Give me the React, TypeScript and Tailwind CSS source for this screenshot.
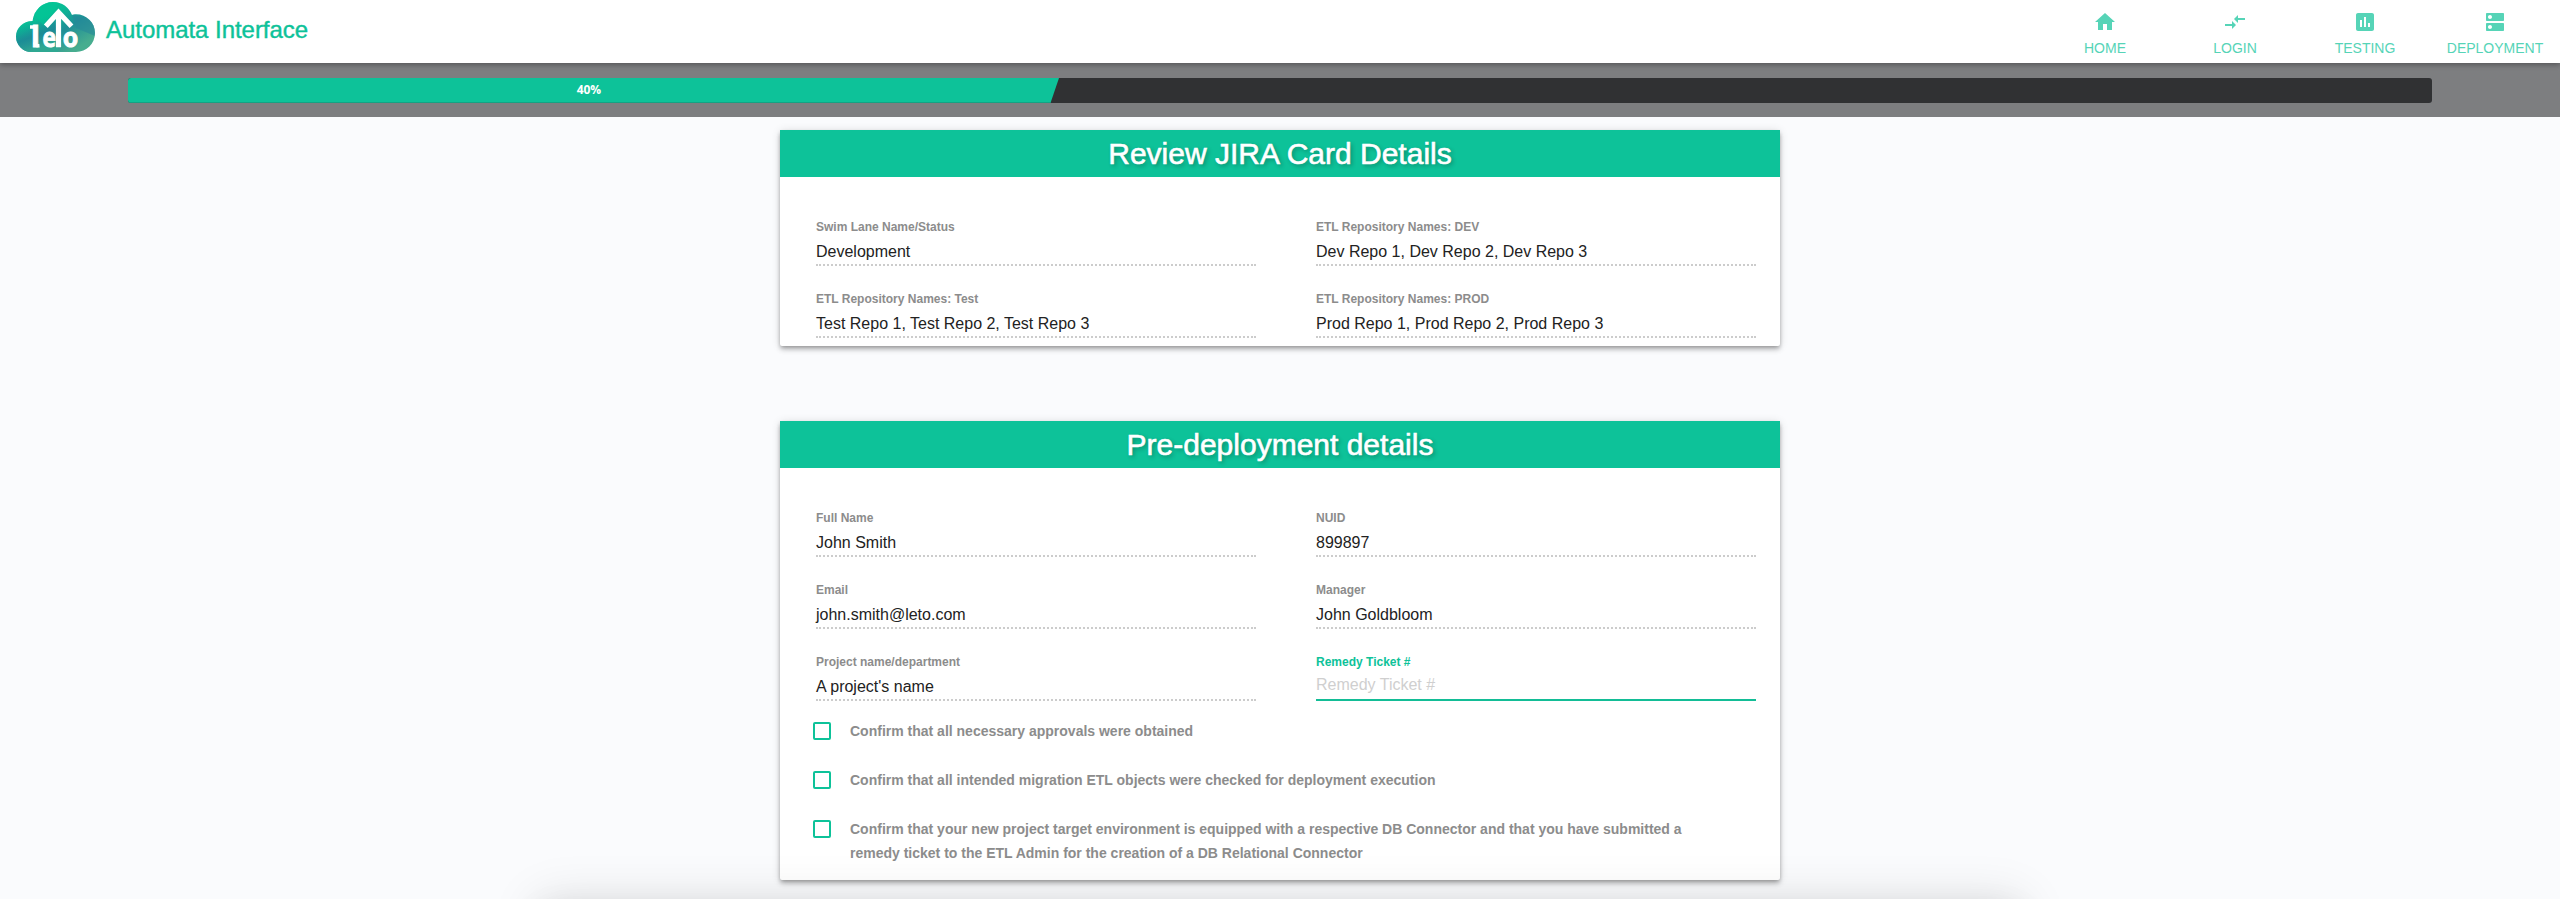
import type { ReactNode } from 'react';

const HOME = 'M10 20v-6h4v6h5v-8h3L12 3 2 12h3v8z';
const COMPARE = 'M9.01 14H2v2h7.01v3L13 15l-3.99-4v3zm5.98-1v-3H22V8h-7.01V5L11 9l3.99 4z';
const ASSESSMENT =
  'M19 3H5c-1.1 0-2 .9-2 2v14c0 1.1.9 2 2 2h14c1.1 0 2-.9 2-2V5c0-1.1-.9-2-2-2zM9 17H7v-7h2v7zm4 0h-2V7h2v10zm4 0h-2v-4h2v4z';
const DNS =
  'M20 13H4c-.55 0-1 .45-1 1v6c0 .55.45 1 1 1h16c.55 0 1-.45 1-1v-6c0-.55-.45-1-1-1zM7 19c-1.1 0-2-.9-2-2s.9-2 2-2 2 .9 2 2-.9 2-2 2zM20 3H4c-.55 0-1 .45-1 1v6c0 .55.45 1 1 1h16c.55 0 1-.45 1-1V4c0-.55-.45-1-1-1zM7 9c-1.1 0-2-.9-2-2s.9-2 2-2 2 .9 2 2-.9 2-2 2z';

const NAV = [
  { label: 'HOME', d: HOME },
  { label: 'LOGIN', d: COMPARE },
  { label: 'TESTING', d: ASSESSMENT },
  { label: 'DEPLOYMENT', d: DNS },
];

function Logo() {
  return (
    <svg viewBox="0 0 79 60" className="h-[60px] w-[79px] shrink-0">
      <defs>
        <linearGradient id="cloud" x1="0" y1="0" x2="1" y2="1">
          <stop offset="0.1" stopColor="#0dbf98" />
          <stop offset="0.35" stopColor="#08bd95" />
          <stop offset="0.58" stopColor="#1f8f97" />
          <stop offset="0.85" stopColor="#47ad8f" />
        </linearGradient>
        <linearGradient id="cloudLeft" x1="0" y1="0" x2="0.300" y2="1">
          <stop offset="0.45" stopColor="#1d8796" stopOpacity="0" />
          <stop offset="0.75" stopColor="#1d8796" stopOpacity=".85" />
          <stop offset="1" stopColor="#2fa892" />
        </linearGradient>
        <clipPath id="cloudShape">
          <path d="M15.500 50A15.500 15.500 0 0 1 0 34.500C0 26 7 18.800 16.500 18.900 18 8 26.500 0 37 0c9 0 16 5.200 19 13 1-.4 2.500-.7 4-.7C70.500 12.300 79 20.500 79 31S70.500 50 60 50z" />
        </clipPath>
      </defs>
      <g clipPath="url(#cloudShape)">
        <rect width="79" height="50" fill="url(#cloud)" />
        <rect width="42" height="50" fill="url(#cloudLeft)" />
        <path d="M16 10 30 0h14L28 24z" fill="#00c896" opacity=".6" />
        <path d="M56 12 79 20v14L60 26z" fill="#27899a" opacity=".6" />
      </g>
      <path d="M42.500 45.300V11M29.800 24.300 42.500 10.300l13 14" fill="none" stroke="#fff" strokeWidth="5.200" />
      <g fill="#fff" stroke="#fff" strokeWidth=".9" fontFamily="'Open Sans', sans-serif" fontWeight="700">
        <text x="15" y="45.300" fontSize="29">l</text>
        <text x="26.500" y="45.300" fontSize="26" textLength="13.500" lengthAdjust="spacingAndGlyphs">e</text>
        <text x="46.800" y="45.300" fontSize="26" textLength="15.500" lengthAdjust="spacingAndGlyphs">o</text>
      </g>
      <path d="M14 25h4M19 40.500c0 2.500 1 3.500 4.500 3.200" fill="none" stroke="#fff" strokeWidth="3.600" />
    </svg>
  );
}

function Card({ title, children }: { title: string; children: ReactNode }) {
  return (
    <section className="w-[1000px] rounded-[2px] bg-white shadow-[0_4px_5px_0_rgba(0,0,0,0.14),0_1px_10px_0_rgba(0,0,0,0.12),0_2px_4px_-1px_rgba(0,0,0,0.3)]">
      <h2 className="h-[47px] bg-[#0dc299] text-center text-[30px] leading-[48px] text-white [-webkit-text-stroke:0.6px_white] [text-shadow:2px_2px_4px_rgba(0,0,0,0.3)]">
        {title}
      </h2>
      <div className="px-6 pt-[17px]">{children}</div>
    </section>
  );
}

function Field({ label, value, active }: { label: string; value: string; active?: boolean }) {
  return (
    <div className="flex h-[72px] flex-col justify-end">
      <label className={active ? 'mb-1 text-xs font-bold leading-4 text-[#0dc299]' : 'mb-[5px] text-xs font-bold leading-4 text-[#8c8c8c]'}>
        {label}
      </label>
      <div
        className={
          active
            ? 'border-b-2 border-[#13bd96] pb-[3px] text-base leading-[22px] text-[#cfcfcf]'
            : 'border-b-2 border-dotted border-[#cccccc] text-base leading-6 text-[#222222]'
        }
      >
        {value}
      </div>
    </div>
  );
}

function Check({ children }: { children: ReactNode }) {
  return (
    <div className="flex gap-[19px]">
      <span className="mt-[3px] size-[18px] shrink-0 rounded-[2px] border-2 border-[#0dc299]" />
      <span className="w-[860px] text-sm font-bold leading-6 text-[#8c8c8c]">{children}</span>
    </div>
  );
}

export default function App() {
  return (
    <div className="relative flex h-[899px] flex-col overflow-hidden bg-[#fafbfd] font-['Liberation_Sans',Arial,sans-serif]">
      <header className="z-10 flex h-[63px] shrink-0 justify-between bg-white shadow-[0_2px_5px_0_rgba(0,0,0,0.3)]">
        <div className="flex items-start pl-4 pt-0.5">
          <Logo />
          <h1 className="ml-[11px] mt-[10px] text-2xl leading-9 tracking-[-0.04px] text-[#0dc299] [-webkit-text-stroke:0.4px_#0dc299]">
            Automata Interface
          </h1>
        </div>
        <nav className="flex">
          {NAV.map((item) => (
            <a key={item.label} className="flex w-[130px] flex-col items-center pt-[10px] text-[#56d4b7]">
              <svg viewBox="0 0 24 24" className="size-6 fill-current">
                <path d={item.d} />
              </svg>
              <span className="mt-1 text-sm leading-5">{item.label}</span>
            </a>
          ))}
        </nav>
      </header>

      <div className="h-[54px] shrink-0 bg-[#7d7e80] px-32 pt-[15px]">
        <div className="h-[25px] overflow-hidden rounded-[3px] bg-[#303133]">
          <div className="relative flex h-full w-2/5 items-center justify-center border-b border-[#14a283] bg-[#0dc299]">
            <span className="font-['Open_Sans',sans-serif] text-xs font-bold tracking-[-0.2px] text-white">40%</span>
            <svg viewBox="0 0 9 25" className="absolute left-full top-0 h-[25px] w-[9px]">
              <path d="M0 0h9L.5 25H0z" fill="#0dc299" />
            </svg>
          </div>
        </div>
      </div>

      <main className="flex flex-col items-center gap-[75px] pt-[13px]">
        <Card title="Review JIRA Card Details">
          <div className="grid grid-cols-[440px_440px] gap-x-[60px] px-3 pb-2">
            <Field label="Swim Lane Name/Status" value="Development" />
            <Field label="ETL Repository Names: DEV" value="Dev Repo 1, Dev Repo 2, Dev Repo 3" />
            <Field label="ETL Repository Names: Test" value="Test Repo 1, Test Repo 2, Test Repo 3" />
            <Field label="ETL Repository Names: PROD" value="Prod Repo 1, Prod Repo 2, Prod Repo 3" />
          </div>
        </Card>

        <Card title="Pre-deployment details">
          <div className="grid grid-cols-[440px_440px] gap-x-[60px] px-3">
            <Field label="Full Name" value="John Smith" />
            <Field label="NUID" value="899897" />
            <Field label="Email" value="john.smith@leto.com" />
            <Field label="Manager" value="John Goldbloom" />
            <Field label="Project name/department" value="A project's name" />
            <Field label="Remedy Ticket #" value="Remedy Ticket #" active />
          </div>
          <div className="flex flex-col gap-[25px] pb-[15px] pl-[9px] pt-[18px]">
            <Check>Confirm that all necessary approvals were obtained</Check>
            <Check>Confirm that all intended migration ETL objects were checked for deployment execution</Check>
            <Check>
              Confirm that your new project target environment is equipped with a respective DB Connector and that you have submitted a
              remedy ticket to the ETL Admin for the creation of a DB Relational Connector
            </Check>
          </div>
        </Card>
      </main>

      {/* Closed bottom sheet: only its shadow rises above the lower edge */}
      <div className="absolute left-[545px] top-full h-80 w-[1470px] shadow-[0_24px_38px_3px_rgba(0,0,0,0.14),0_9px_46px_8px_rgba(0,0,0,0.12),0_11px_15px_-7px_rgba(0,0,0,0.2)]" />
    </div>
  );
}
